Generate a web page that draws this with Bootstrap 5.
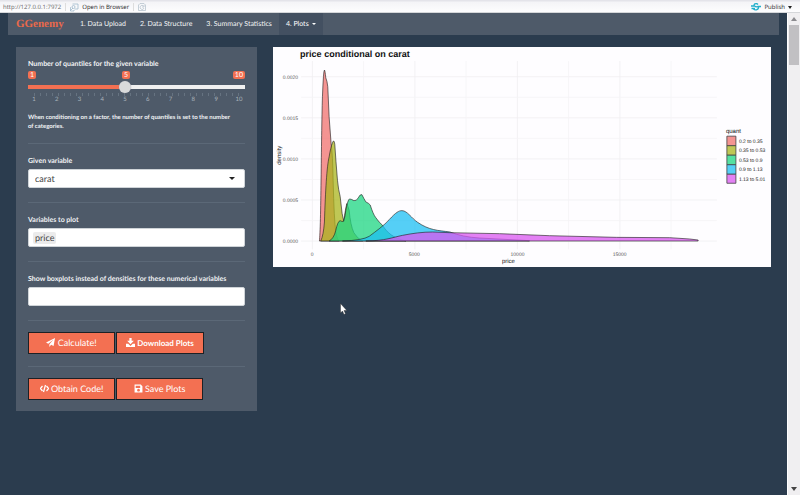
<!DOCTYPE html>
<html lang="en">
<head>
<meta charset="utf-8">
<meta name="viewport" content="width=device-width, initial-scale=1">
<title>GGenemy</title>
<link href="https://cdn.jsdelivr.net/npm/bootstrap@5.3.0/dist/css/bootstrap.min.css" rel="stylesheet">
<style>
body{font-family:Lato,"Liberation Sans",sans-serif;font-size:7px;line-height:10px;background:#2b3c4e;color:#f1f3f5;text-rendering:geometricPrecision}
button,input,select{font-family:inherit;text-rendering:inherit}
.viewer-bar{height:13px;background:linear-gradient(#e4e4ea 0 1px,#f4f4f7 2px,#fdfdfe);color:#333;font-family:"Open Sans","Noto Sans",sans-serif;line-height:13px;border-bottom:1px solid #d5d7da;padding:2px 8px 0 3px}
.viewer-bar button{font-size:6px;line-height:10px;color:#222;gap:3px}
.viewer-bar .address{color:#666;font-size:6px;line-height:10px}
.divider{width:1px;height:8px;background:#ddd}
.site-nav{background:#4e5a69;height:22px}
.site-nav .navbar-brand{font:bold 11px/22px "Liberation Serif",serif;color:#e9694b;width:57px}
.site-nav .navbar-nav .nav-link{font-size:7px;line-height:22px;color:#f4f5f6;padding:0 7px}
.site-nav .navbar-nav .nav-link.active{background:#435061;color:#fff}
.site-nav .dropdown-toggle::after{border-width:2px;border-bottom:0;margin-left:3px;vertical-align:1px}
.side-panel{background:#4e5a69;padding:12px 12px 11px}
.side-panel label,.hint{font-size:7px;line-height:10px;font-weight:700;display:block}
.side-panel hr{margin:14px 0 12px;border-color:#647180;opacity:.6}
.side-panel hr.tight{margin:12px 0 11px}
.side-panel hr.after-field{margin:14px 0 11px}
.side-panel .hint + hr{margin-top:12px}
.field{height:19px;min-height:19px;border:1px solid #cfd4d8;border-radius:2px;padding:0 6px;font-size:9px;line-height:17px;color:#444;background-color:#fff;margin-top:3px}
select.field{appearance:none;background:#fff url("data:image/svg+xml,%3Csvg xmlns='http://www.w3.org/2000/svg' viewBox='0 0 6 4'%3E%3Cpath d='M0 0h6L3 3z' fill='%23222'/%3E%3C/svg%3E") no-repeat right 9px center/6px 4px}
.picked{background:#ebebeb;border-radius:2px;padding:0 2px;line-height:12px;margin-left:-2px}
.bare{border:0;outline:0;background:none;min-width:0;height:15px;font-size:9px}
.bubbles{margin-top:2px}
.bubble-run{width:47%}
.bubble{background:#f37052;color:#fff;border-radius:2px;font-size:7px;line-height:8px;padding:0 2px;min-width:6px}
.slider{appearance:none;display:block;width:100%;height:12px;margin:2px 0 0;background:linear-gradient(90deg,#f37052 45%,#f0f0f0 45%) no-repeat center/100% 4px;border-radius:2px}
.slider::-webkit-slider-thumb{appearance:none;width:12px;height:12px;border-radius:50%;background:#d9dadb;box-shadow:0 0 1px #889}
.scale span{width:12px;text-align:center;font-size:6px;line-height:8px;color:#a9b2bb}
.ticks{height:3px;margin:0 6px;background:repeating-linear-gradient(90deg,#667381 0 1px,transparent 1px 6px)}
.side-panel .hint{margin-top:9px;font-size:6px;line-height:9px;white-space:nowrap}
.acts{gap:1px}
.act{width:87px;height:22px;border:1px solid #1d2125;border-radius:0;background:#f37052;color:#fff;font-size:9px;line-height:20px;padding:0;white-space:nowrap}
.act.wide{width:88px;font-weight:700;font-size:8px}
.act:hover{background:#e5603f;color:#fff}
.act svg{width:9px;height:9px;vertical-align:-1px}
.plot-box{background:#fefdff}
.plot-box text{font-family:"Liberation Sans",Arial,sans-serif}
.scroll-rail{width:13px;background:#f0eff1;border-left:1px solid #fff}
.scroll-rail .grip{height:40px;background:#c1c0c3;margin:0 1px}
.arrow-cell{height:12px}
.pointer{left:340px;top:303px;width:7px;height:12px}
</style>
</head>
<body class="d-flex flex-column min-vh-100">
<header class="viewer-bar d-flex align-items-center">
  <span class="address">http://127.0.0.1:7972</span>
  <span class="divider ms-1 me-1"></span>
  <button class="btn p-0 border-0 d-flex align-items-center" type="button">
    <svg width="9" height="9" viewBox="0 0 18 18" fill="none" stroke="#9bb5c9" stroke-width="1.5"><path d="M5 2h11v10H9M1 15l5-5M2 9H1v7h7v-2" /><circle cx="7" cy="8" r="3"/></svg>Open in Browser</button>
  <span class="divider mx-1"></span>
  <button class="btn p-0 border-0 d-flex align-items-center" type="button" aria-label="Refresh">
    <svg width="8" height="8" viewBox="0 0 16 16" fill="none" stroke="#b4c2cc" stroke-width="1.5"><path d="M4 1h8l3 3v11H1V4zM11 6a4 4 0 1 0 1 4M12 4v4H8"/></svg></button>
  <button class="btn p-0 border-0 d-flex align-items-center ms-auto" type="button">
    <svg width="10" height="8" viewBox="0 0 20 16" fill="none" stroke="#20aeca" stroke-width="2.6"><path d="M14 3C10-1 4 3 7 6s9 0 8 4-7 5-10 2M0 6h6M13 7h7M1 11h7"/></svg>Publish
    <svg width="4" height="3" viewBox="0 0 4 3"><path d="M0 0h4L2 3z" fill="#222"/></svg></button>
</header>
<div class="d-flex flex-grow-1">
  <div class="flex-grow-1">
    <div class="container-fluid px-2">
      <nav class="site-nav navbar navbar-expand p-0 px-2 align-items-center">
        <a class="navbar-brand p-0 m-0" href="#">GGenemy</a>
        <ul class="navbar-nav">
          <li class="nav-item"><a class="nav-link" href="#">1. Data Upload</a></li>
          <li class="nav-item"><a class="nav-link" href="#">2. Data Structure</a></li>
          <li class="nav-item"><a class="nav-link" href="#">3. Summary Statistics</a></li>
          <li class="nav-item dropdown"><a class="nav-link active dropdown-toggle" href="#" role="button" data-bs-toggle="dropdown">4. Plots</a></li>
        </ul>
      </nav>
      <main class="row gx-3 mx-0 mt-2 pt-1">
        <div class="col-4">
          <form class="side-panel">
            <label for="quantiles">Number of quantiles for the given variable</label>
            <div class="bubbles d-flex justify-content-between">
              <span class="bubble-run d-flex justify-content-between"><span class="bubble">1</span><span class="bubble">5</span></span><span class="bubble">10</span>
            </div>
            <input class="slider" id="quantiles" type="range" min="1" max="10" value="5">
            <div class="ticks"></div>
            <div class="scale d-flex justify-content-between"><span>1</span><span>2</span><span>3</span><span>4</span><span>5</span><span>6</span><span>7</span><span>8</span><span>9</span><span>10</span></div>
            <p class="hint mb-0">When conditioning on a factor, the number of quantiles is set to the number<br>of categories.</p>
            <hr>
            <label for="given">Given variable</label>
            <select class="field w-100 d-block" id="given"><option>carat</option></select>
            <hr>
            <label for="plotvars">Variables to plot</label>
            <div class="field d-flex align-items-center"><span class="picked">price</span><input class="bare flex-grow-1" id="plotvars" type="text"></div>
            <hr>
            <label for="boxvars">Show boxplots instead of densities for these numerical variables</label>
            <input class="field w-100 d-block" id="boxvars" type="text">
            <hr class="after-field">
            <div class="acts d-flex">
              <button class="btn act" type="button"><svg viewBox="0 0 16 16" fill="#fff"><path d="M16 0 13.500 14 9 12l-3 4v-5L13 3 4 10 0 8z"/></svg> Calculate!</button>
              <button class="btn act wide" type="button"><svg viewBox="0 0 16 16" fill="#fff"><path d="M6 0h4v5h4L8 11 2 5h4zM0 10h4l4 4 4-4h4v6H0z"/></svg> Download Plots</button>
            </div>
            <hr class="tight">
            <div class="acts d-flex">
              <button class="btn act" type="button"><svg viewBox="0 0 18 16" fill="none" stroke="#fff" stroke-width="2.500"><path d="M5 3 1 8l4 5M13 3l4 5-4 5M11 1 7 15"/></svg> Obtain Code!</button>
              <button class="btn act" type="button"><svg viewBox="0 0 16 16"><path fill="#fff" fill-rule="evenodd" d="M1 1h11l3 3v11H1zM3 3v4h8V3zM8 8.500a2.500 2.500 0 1 0 .1 0z"/></svg> Save Plots</button>
            </div>
          </form>
        </div>
        <div class="col-8">
          <div class="plot-box">
            <svg id="plot" class="d-block w-100" viewBox="274 47 497 220" role="img" aria-label="price conditional on carat">
              <g stroke="#f0eff1" stroke-width=".8">
                <path d="M302 240.700H717M302 199.700H717M302 158.700H717M302 117.700H717M302 76.700H717M313.300 61V249M415.600 61V249M517.900 61V249M620.200 61V249"/>
                <path stroke="#f5f4f6" d="M302 220.200H717M302 179.200H717M302 138.200H717M302 97.200H717M364.400 61V249M466.700 61V249M569 61V249M671.300 61V249"/>
              </g>
              <g transform="translate(270 40) scale(.3333)" stroke="#222" stroke-opacity=".85" stroke-width="2.200" stroke-linejoin="round" fill-opacity=".75">
                <path fill="#f0706d" d="M151 602C156 560 156 300 160 170Q163 90 166 90Q168 92 170 113Q174 122 176 140L180 230 186 310Q191 345 192 420Q195 540 200 575Q205 600 210 602Z"/>
                <path fill="#a9b41c" d="M155 602Q163 585 166 545C169 450 173 380 180 350Q185 320 190 308Q194 295 197 312Q200 360 205 420Q208 450 213 468L219 520 224 543Q229 505 233 490Q237 500 240 510Q244 555 254 577Q264 594 280 602Z"/>
                <path fill="#1cd681" d="M180 602Q194 595 200 570Q206 542 213 541Q219 545 223 543Q228 530 230 510Q236 478 241 476Q248 477 254 481Q262 483 267 473Q273 461 278 463Q284 475 290 485Q298 488 303 494Q312 522 319 531Q330 547 340 555C355 578 370 592 410 602Z"/>
                <path fill="#1cbff3" d="M220 602Q280 600 300 588C320 573 345 555 360 538C380 516 389 511 398 511C414 511 427 534 445 546C480 570 505 570 542 575Q580 590 630 593L780 601V602Z"/>
                <path fill="#d957f0" d="M290 602C350 601 370 591 400 585C430 579 460 575 490 575L540 577 690 580 840 586 1040 591 1200 592 1260 596 1285 599V602Z"/>
              </g>
              <text x="301" y="57" font-size="9" font-weight="700" fill="#111">price conditional on carat</text>
              <g font-size="5" fill="#555" text-anchor="end">
                <text x="299" y="243">0.0000</text><text x="299" y="202">0.0005</text><text x="299" y="161">0.0010</text><text x="299" y="120">0.0015</text><text x="299" y="79">0.0020</text>
              </g>
              <g font-size="5" fill="#555" text-anchor="middle">
                <text x="313" y="256">0</text><text x="415" y="256">5000</text><text x="518" y="256">10000</text><text x="620" y="256">15000</text>
              </g>
              <g font-size="6" fill="#111">
                <text x="509" y="263" text-anchor="middle">price</text>
                <text transform="translate(282 155) rotate(-90)" text-anchor="middle">density</text>
                <text x="726" y="133">quant</text>
              </g>
              <g stroke="#444" stroke-width=".8">
                <path fill="#f49491" d="M727 136h9v9.500h-9z"/><path fill="#bfc755" d="M727 145.500h9v9.500h-9z"/><path fill="#55e0a1" d="M727 155h9v9.500h-9z"/><path fill="#55cff6" d="M727 164.500h9v9.500h-9z"/><path fill="#e381f4" d="M727 174h9v9h-9z"/>
              </g>
              <g font-size="5" fill="#222">
                <text x="739" y="143">0.2 to 0.35</text><text x="739" y="152">0.35 to 0.53</text><text x="739" y="162">0.53 to 0.9</text><text x="739" y="171">0.9 to 1.13</text><text x="739" y="181">1.13 to 5.01</text>
              </g>
            </svg>
          </div>
        </div>
      </main>
    </div>
  </div>
  <div class="scroll-rail d-flex flex-column">
    <div class="arrow-cell d-flex align-items-center justify-content-center"><svg width="6" height="4" viewBox="0 0 6 4"><path d="M0 4h6L3 0z" fill="#8b8b8f"/></svg></div>
    <div class="grip"></div>
    <div class="arrow-cell d-flex align-items-center justify-content-center mt-auto"><svg width="6" height="4" viewBox="0 0 6 4"><path d="M0 0h6L3 4z" fill="#444"/></svg></div>
  </div>
</div>
<svg class="pointer position-absolute" viewBox="0 0 7 12"><path d="M.5.500v9.500l2-2 1.500 3.500 1.500-.7L4 7.500h2.800z" fill="#fff" stroke="#222" stroke-width=".4"/></svg>
<script src="https://cdn.jsdelivr.net/npm/bootstrap@5.3.0/dist/js/bootstrap.bundle.min.js"></script>
</body>
</html>
